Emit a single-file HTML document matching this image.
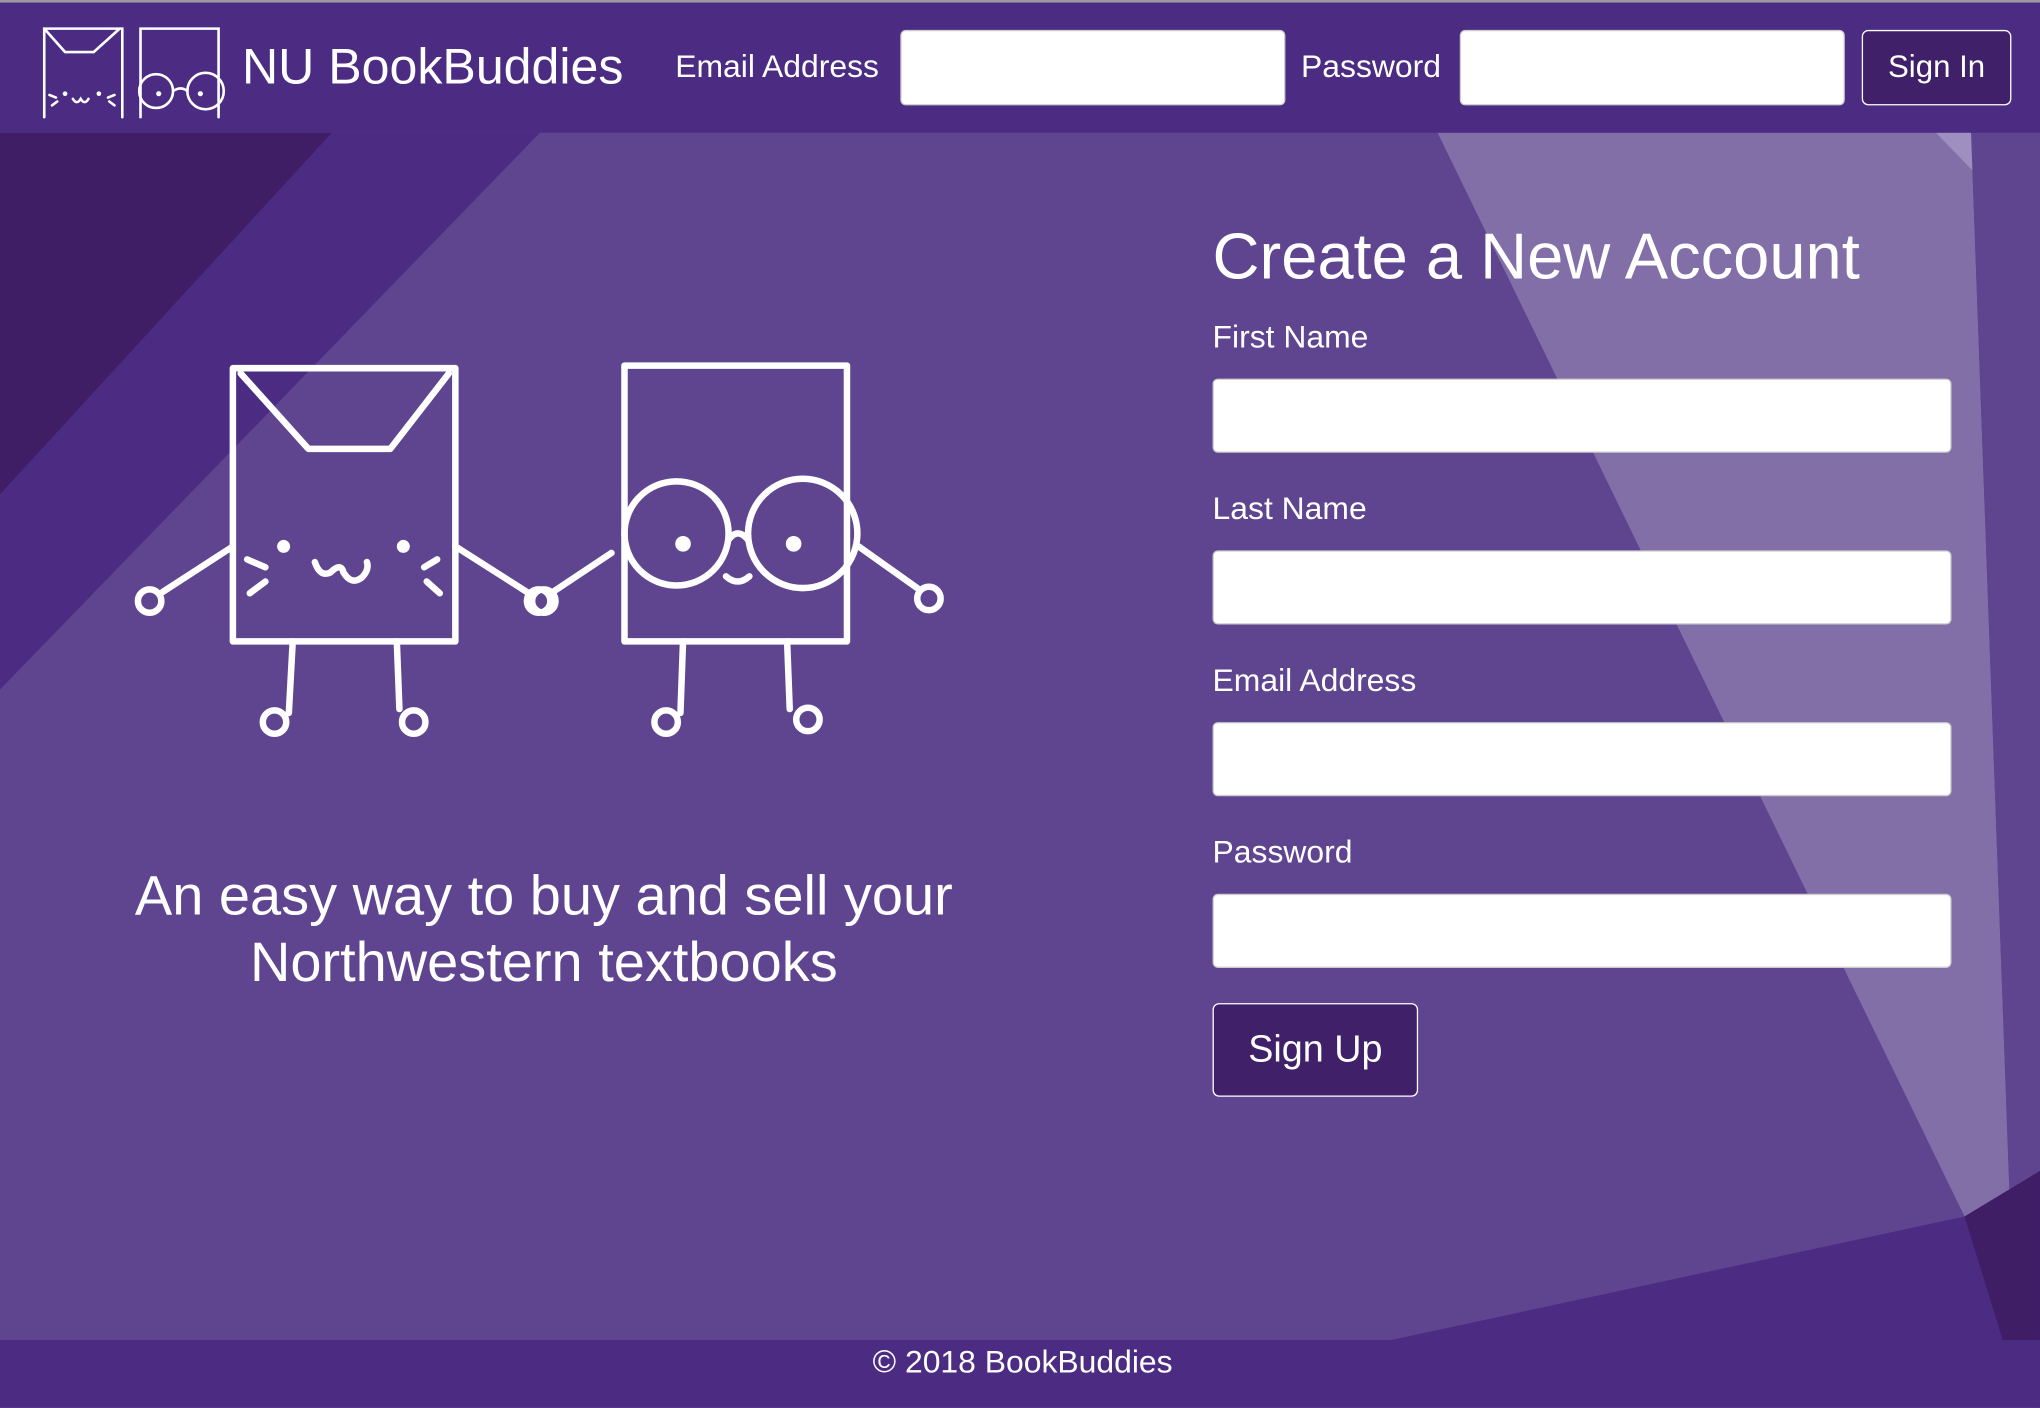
<!DOCTYPE html>
<html><head><meta charset="utf-8"><style>
html,body{margin:0;padding:0;width:2040px;height:1408px;overflow:hidden;background:#5f4590;font-family:"Liberation Sans",sans-serif;color:#fff}
#s{position:absolute;left:0;top:0;width:1568px;height:1082px;transform:scale(1.30102);transform-origin:0 0;background:#5f4590;overflow:hidden}
.nav{position:absolute;left:0;top:0;width:1568px;height:102px;background:#4b2c82;border-top:2px solid #9a98a0;box-sizing:border-box}
.ab{position:absolute;white-space:nowrap}
.inp{position:absolute;background:#fff;border:1px solid #ccc;border-radius:4px;box-sizing:border-box}
.btn{position:absolute;background:#3f2069;border:1.5px solid #fff;border-radius:5px;box-sizing:border-box;color:#fff;text-align:center}
.lbl{position:absolute;left:932px;font-size:24.5px}
</style></head><body><div id="s">
<svg class="ab" style="left:0;top:0" width="1568" height="1082">
<polygon points="0,102 1568,102 1568,1082 0,1082" fill="#5f4590"/>
<polygon points="0,102 415,102 0,530" fill="#4b2c82"/>
<polygon points="0,102 255,102 0,380" fill="#3f1e66"/>
<polygon points="1105,102 1515,102 1545,930 1510,935" fill="#836fa8"/>
<polygon points="1488,102 1515,102 1520,135" fill="#9e8fc0"/>
<polygon points="1515,102 1568,102 1568,900 1545,930" fill="#5f4590"/>
<polygon points="1060,1032 1510,935 1568,900 1568,1032" fill="#4b2c82"/>
<polygon points="1510,935 1568,900 1568,1032 1540,1032" fill="#3f1e66"/>
<rect x="0" y="1030" width="1568" height="52" fill="#4b2c82"/>
<g fill="none" stroke="#fff" stroke-width="5" stroke-linecap="round" stroke-linejoin="round">
<rect x="179" y="283" width="171" height="210"/>
<polyline points="185,287 237,345 300,345 345,287"/>
<path d="M242,432 q4,12 12,8 q8,-8 10,0 q6,10 14,4 q6,-6 4,-12"/>
<path d="M190,430 l14,6 M192,456 l12,-9 M336,430 l-10,6 M338,456 l-10,-9"/>
<path d="M179,420 L125,455 M350,420 L405,455"/>
<circle cx="115" cy="462" r="9"/><circle cx="414" cy="462" r="9"/>
<path d="M225,493 L222,548 M305,493 L307,545"/>
<circle cx="211" cy="555" r="9"/><circle cx="318" cy="555" r="9"/>
<rect x="480" y="281" width="171" height="212"/>
<circle cx="520" cy="410" r="40"/><circle cx="617" cy="410" r="42"/>
<path d="M560,415 q7,-10 15,0"/>
<path d="M558,443 q9,8 18,0"/>
<path d="M470,425 L425,455 M660,420 L705,452"/>
<circle cx="418" cy="462" r="9"/><circle cx="714" cy="460" r="9"/>
<path d="M525,493 L523,548 M605,493 L607,545"/>
<circle cx="512" cy="555" r="9"/><circle cx="621" cy="553" r="9"/>
</g>
<g fill="#fff"><circle cx="218" cy="420" r="5"/><circle cx="310" cy="420" r="5"/><circle cx="525" cy="418" r="6"/><circle cx="610" cy="418" r="6"/></g>
</svg>
<div class="nav"></div>
<svg class="ab" style="left:30px;top:18px" width="150" height="76">
<g fill="none" stroke="#fff" stroke-width="2" stroke-linecap="round">
<path d="M4,72 V4 H64 V72 M4,4 L20,22 H42 L62,4"/>
<path d="M78,72 V4 H138 V72"/>
<circle cx="90" cy="52" r="13"/><circle cx="128" cy="52" r="14"/>
<path d="M103,52 q6,-4 11,0 M26,58 q3,5 6,0 q3,5 6,0 M8,55 l5,2 M10,63 l4,-3 M58,55 l-5,2 M58,63 l-4,-3"/>
</g>
<g fill="#fff"><circle cx="20" cy="54" r="1.8"/><circle cx="46" cy="54" r="1.8"/><circle cx="92" cy="54" r="2"/><circle cx="124" cy="54" r="2"/></g>
</svg>
<div class="ab" style="left:186px;top:30px;font-size:38.5px">NU BookBuddies</div>
<div class="ab" style="left:519px;top:38px;font-size:24.5px">Email Address</div>
<div class="inp" style="left:692px;top:23px;width:296px;height:58px"></div>
<div class="ab" style="left:1000px;top:38px;font-size:24.5px">Password</div>
<div class="inp" style="left:1122px;top:23px;width:296px;height:58px"></div>
<div class="btn" style="left:1431px;top:23px;width:115px;height:58px;font-size:24px;line-height:55px">Sign In</div>
<div class="ab" style="left:0;width:836px;text-align:center;top:664px;font-size:43px;line-height:51px">An easy way to buy and sell your<br>Northwestern textbooks</div>
<div class="ab" style="left:932px;top:168px;font-size:50px">Create a New Account</div>
<div class="lbl" style="top:246px">First Name</div>
<div class="inp" style="left:932px;top:291px;width:568px;height:57px"></div>
<div class="lbl" style="top:378px">Last Name</div>
<div class="inp" style="left:932px;top:423px;width:568px;height:57px"></div>
<div class="lbl" style="top:510px">Email Address</div>
<div class="inp" style="left:932px;top:555px;width:568px;height:57px"></div>
<div class="lbl" style="top:642px">Password</div>
<div class="inp" style="left:932px;top:687px;width:568px;height:57px"></div>
<div class="btn" style="left:932px;top:771px;width:158px;height:72px;font-size:29px;line-height:70px">Sign Up</div>
<div class="ab" style="left:0;width:1572px;text-align:center;top:1034px;font-size:24.5px">© 2018 BookBuddies</div>
</div></body></html>
